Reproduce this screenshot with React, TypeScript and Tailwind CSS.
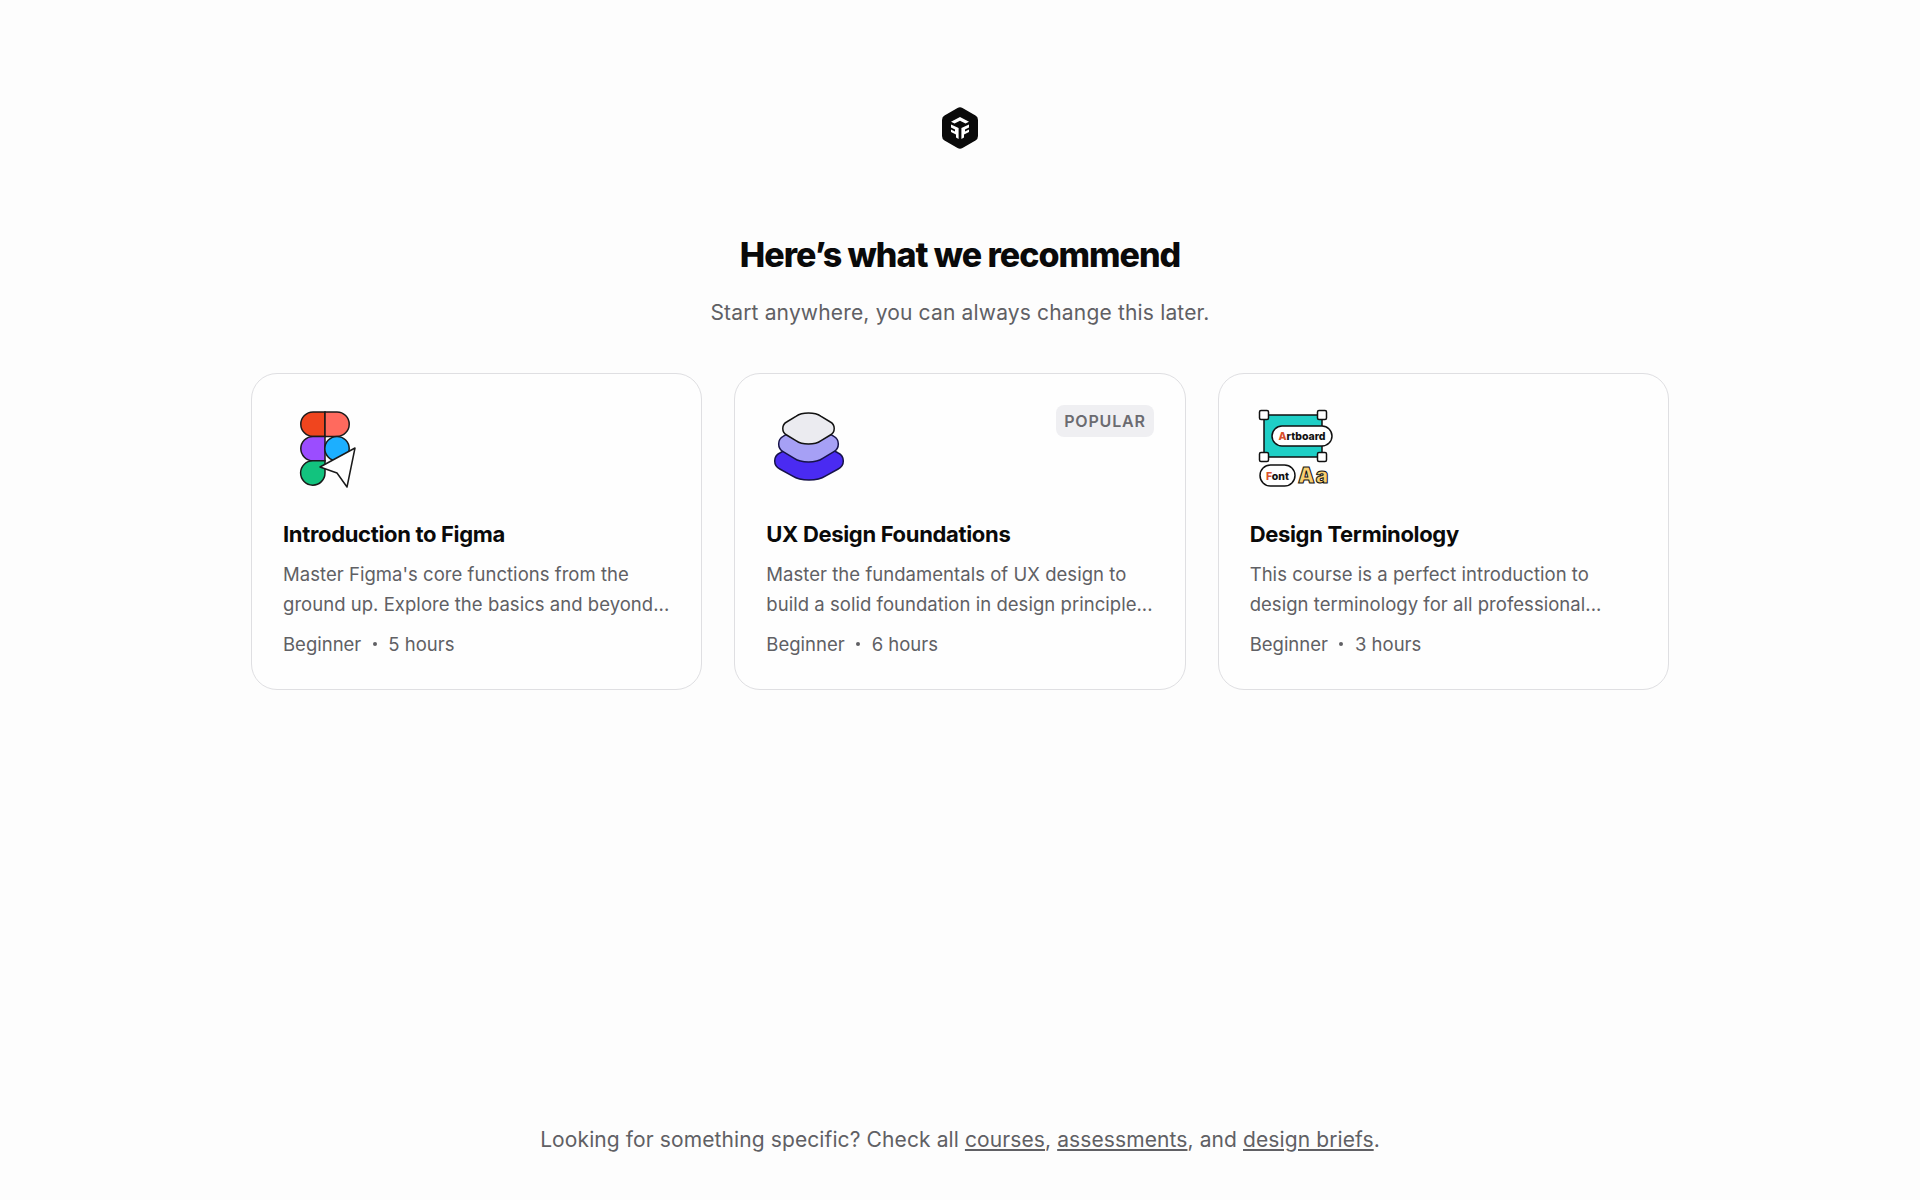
import React from "react";

const font = { fontFamily: "Inter, sans-serif" };

function Logo() {
  return (
    <svg width="36" height="42" viewBox="0 0 36 42" className="block">
      <path d="M15.5 1 Q18 -0.3 20.5 1 L33.5 8.6 Q36 10 36 13 L36 29 Q36 32 33.5 33.4 L20.5 41 Q18 42.3 15.5 41 L2.5 33.4 Q0 32 0 29 L0 13 Q0 10 2.5 8.6 Z" fill="#0a0a0a" />
      <path d="M18 10 L27 14.8 L23.5 16.6 L18 13.8 L12.5 16.6 L9 14.8 Z" fill="#fff" />
      <path d="M9 17.5 L16.6 21 L16.6 32 L14 30.6 L14 27.5 L9 25 L9 22.6 L13 24.4 L13 22.4 L9 20.6 Z" fill="#fff" />
      <path d="M27 17.5 L19.4 21 L19.4 32 L22 30.6 L22 27.5 L27 25 L27 22.6 L23 24.4 L23 22.4 L27 20.6 Z" fill="#fff" />
    </svg>
  );
}

function FigmaIcon() {
  return (
    <svg width="80" height="90" viewBox="0 0 80 90" className="block">
      <g stroke="#1a1a1a" strokeWidth="1.5">
        <path d="M42 7 H30 A12.2 12.2 0 0 0 30 31.4 H42 Z" fill="#f0451e" />
        <path d="M42 7 H54 A12.2 12.2 0 0 1 54 31.4 H42 Z" fill="#ff6a5e" />
        <path d="M42 31.4 H30 A12.2 12.2 0 0 0 30 55.8 H42 Z" fill="#9b4dff" />
        <circle cx="54" cy="43.6" r="12.2" fill="#1cafff" />
        <path d="M42 55.8 H30 A12.2 12.2 0 1 0 42 68 Z" fill="#12c37e" />
        <path d="M37 62 L72 43 L64 82 L54 68 Z" fill="#fff" strokeLinejoin="round" />
      </g>
    </svg>
  );
}

function blob(x0: number, x1: number, y0: number, y1: number) {
  const w = x1 - x0;
  const h = y1 - y0;
  const X = (f: number) => (x0 + w * f).toFixed(1);
  const Y = (f: number) => (y0 + h * f).toFixed(1);
  return `M${X(0.5)} ${Y(0)} C${X(0.6)} ${Y(0)} ${X(0.68)} ${Y(0.03)} ${X(0.74)} ${Y(0.1)} L${X(0.93)} ${Y(0.29)} C${X(1.03)} ${Y(0.38)} ${X(1.03)} ${Y(0.62)} ${X(0.93)} ${Y(0.71)} L${X(0.74)} ${Y(0.9)} C${X(0.68)} ${Y(0.97)} ${X(0.6)} ${Y(1)} ${X(0.5)} ${Y(1)} C${X(0.4)} ${Y(1)} ${X(0.32)} ${Y(0.97)} ${X(0.26)} ${Y(0.9)} L${X(0.07)} ${Y(0.71)} C${X(-0.03)} ${Y(0.62)} ${X(-0.03)} ${Y(0.38)} ${X(0.07)} ${Y(0.29)} L${X(0.26)} ${Y(0.1)} C${X(0.32)} ${Y(0.03)} ${X(0.4)} ${Y(0)} ${X(0.5)} ${Y(0)}Z`;
}

function LayersIcon() {
  return (
    <svg width="80" height="90" viewBox="0 0 80 90" className="block">
      <g stroke="#17134a" strokeWidth="1.5">
        <path d={blob(9, 77, 37, 75)} fill="#4a2bf2" />
        <path d={blob(13, 72, 21, 57)} fill="#a6a0f5" />
        <path d={blob(17, 68, 8, 39)} fill="#ebebf0" stroke="#111" />
      </g>
    </svg>
  );
}

function TermIcon() {
  const handle = (x: number, y: number) => (
    <rect x={x - 4.5} y={y - 4.5} width="9" height="9" rx="1.5" fill="#fff" stroke="#111" strokeWidth="1.5" />
  );
  return (
    <svg width="90" height="90" viewBox="0 0 90 90" className="block" style={font}>
      <rect x="14" y="10" width="58" height="42" fill="#1fcfc6" stroke="#111" strokeWidth="1.5" />
      {handle(14, 10)}
      {handle(72, 10)}
      {handle(14, 52)}
      {handle(72, 52)}
      <rect x="22" y="21" width="60" height="20" rx="10" fill="#fff" stroke="#111" strokeWidth="1.5" />
      <text x="52" y="34.5" textAnchor="middle" fontSize="10.5" fontWeight="800" fill="#111">
        <tspan fill="#d9512c">A</tspan>rtboard
      </text>
      <rect x="10" y="60" width="35" height="21" rx="10.5" fill="#fff" stroke="#111" strokeWidth="1.5" />
      <text x="27.5" y="74.5" textAnchor="middle" fontSize="10.5" fontWeight="800" fill="#111">
        <tspan fill="#d9512c">F</tspan>ont
      </text>
      <text x="48" y="78" fontSize="21" fontWeight="900" fill="#f9cf70" stroke="#111" strokeWidth="1" letterSpacing="1">
        Aa
      </text>
    </svg>
  );
}

const courses = [
  { icon: <FigmaIcon />, title: "Introduction to Figma", l1: "Master Figma's core functions from the", l2: "ground up. Explore the basics and beyond...", hours: "5 hours" },
  { icon: <LayersIcon />, title: "UX Design Foundations", l1: "Master the fundamentals of UX design to", l2: "build a solid foundation in design principle...", hours: "6 hours", popular: true },
  { icon: <TermIcon />, title: "Design Terminology", l1: "This course is a perfect introduction to", l2: "design terminology for all professional...", hours: "3 hours" },
];

export default function App() {
  return (
    <div className="h-[1200px] bg-[#fdfdfd] flex flex-col items-center text-[#606064]" style={font}>
      <div className="pt-[107px]">
        <Logo />
      </div>
      <h1 className="mt-[86px] text-[34px] leading-[40px] font-extrabold tracking-[-0.03em] text-[#0a0a0a]">Here’s what we recommend</h1>
      <p className="mt-[23px] text-[21px] leading-[30px] tracking-[0.008em]">Start anywhere, you can always change this later.</p>
      <div className="mt-[45px] w-[1418px] grid grid-cols-3 gap-[32px]">
        {courses.map((c) => (
          <div key={c.title} className="relative h-[317px] rounded-[26px] border border-[#dfdfe2] bg-[#fefefe] px-[31px] pt-[31px]">
            {c.popular && (
              <span className="absolute top-[31px] right-[31px] h-[32px] rounded-[8px] bg-[#efeff2] px-[8px] text-[16px] leading-[32px] font-semibold tracking-[0.05em] text-[#6b6b70]">POPULAR</span>
            )}
            {c.icon}
            <div className="mt-[24.5px] text-[22px] leading-[28px] font-bold tracking-[-0.015em] text-[#0a0a0a]">{c.title}</div>
            <div className="mt-[12.5px] text-[18.5px] leading-[29.5px] tracking-[0.002em] whitespace-nowrap">
              <div>{c.l1}</div>
              <div>{c.l2}</div>
            </div>
            <div className="mt-[10.5px] flex items-center text-[18.5px] leading-[28px]">
              <span>Beginner</span>
              <span className="mx-[11.5px] h-[4px] w-[4px] rounded-full bg-[#606064]" />
              <span>{c.hours}</span>
            </div>
          </div>
        ))}
      </div>
      <p className="mt-auto mb-[45px] text-[21px] leading-[30px] tracking-[0.005em]">
        Looking for something specific? Check all <a className="underline">courses</a>, <a className="underline">assessments</a>, and <a className="underline">design briefs</a>.
      </p>
    </div>
  );
}
